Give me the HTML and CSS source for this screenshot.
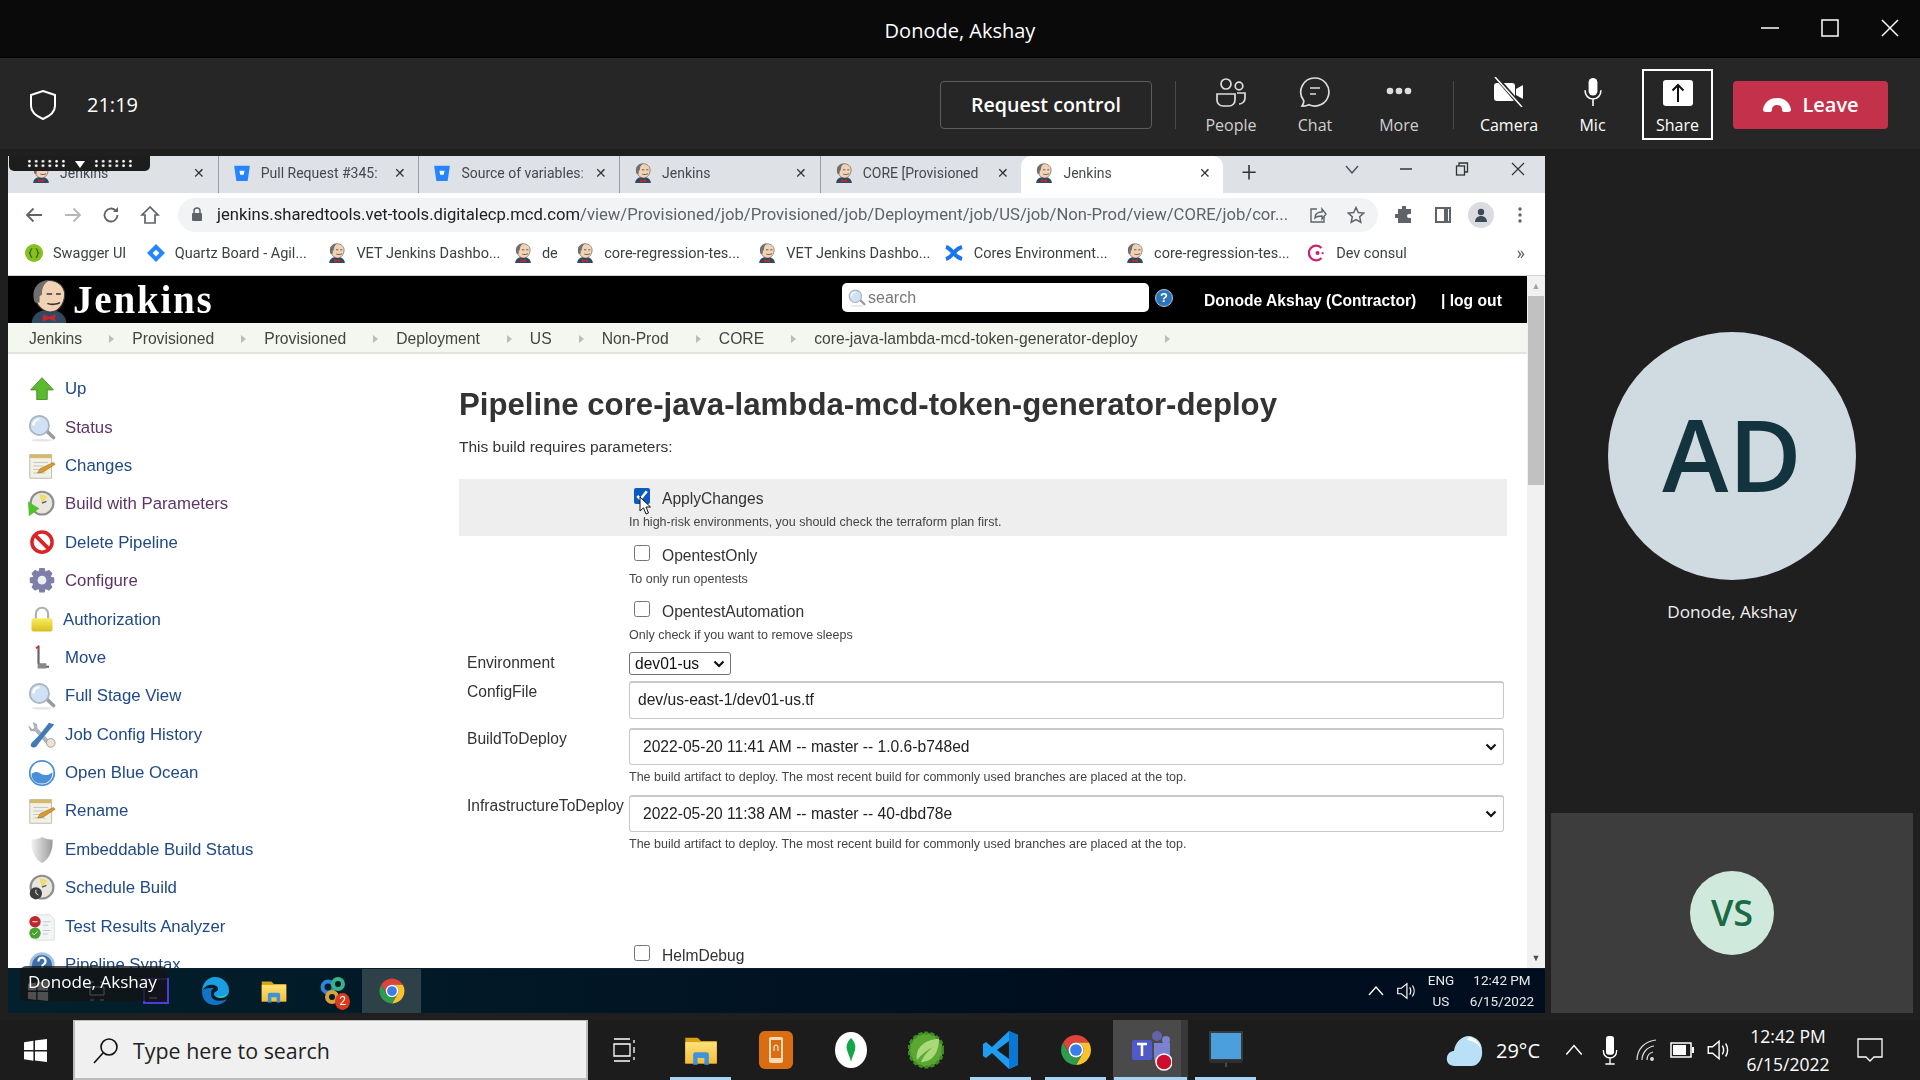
FILE: index.html
```html
<!DOCTYPE html>
<html lang="en">
<head>
    <meta charset="UTF-8">
    <meta name="viewport" content="width=device-width, initial-scale=1.0">
    <title>Meeting - Donode, Akshay</title>
    <link rel="stylesheet" href="styles.css">
</head>
<body>
    <!-- shared icons -->
    <svg class="sprite" xmlns="http://www.w3.org/2000/svg">
        <defs>
            <linearGradient id="lockGold" x1="0" y1="0" x2="0" y2="1"><stop offset="0" stop-color="#f7ee63"/><stop offset="1" stop-color="#d9bf1c"/></linearGradient>
            <linearGradient id="silver" x1="0" y1="0" x2="1" y2="0"><stop offset="0" stop-color="#f2f2f2"/><stop offset="1" stop-color="#9a9a9a"/></linearGradient>
            <linearGradient id="folderFill" x1="0" y1="0" x2="0" y2="1"><stop offset="0" stop-color="#ffe27a"/><stop offset="1" stop-color="#f4bd3c"/></linearGradient>
        </defs>
        <symbol id="butler" viewBox="0 0 24 28">
            <path d="M1 28c0-4 3-7 7-8h8c4 1 7 4 7 8z" fill="#2f4a60"/>
            <path d="M8 22.5l4 1.5 4-1.5v4.5l-4-1.5-4 1.5z" fill="#c7262c"/>
            <path d="M3 11C2 5 6 1 12 1s10 4 10 9c-.3 6-4 11-9 11-5 0-9-4-10-10z" fill="#f2d2b4" stroke="#3a3a3a" stroke-width=".7"/>
            <path d="M3 15C0 7 5 1 12 1 8.500 3 7.500 6 7.500 10l-1.500 1v4z" fill="#6f6f6f"/>
            <path d="M10.500 9.500h3.500M16.500 9.500h3M11 15.500c2 1 6 .8 8-.5" stroke="#333" stroke-width="1" fill="none"/>
        </symbol>
        <symbol id="bitbucket" viewBox="0 0 16 16">
            <path d="M1 1.500h14L13 15H3z" fill="#2684ff"/>
            <path d="M5.800 6h4.400l-.6 3.500H6.400z" fill="#fff"/>
        </symbol>
        <symbol id="chrome" viewBox="0 0 24 24">
            <path d="M3.340 7A10 10 0 0 1 20.660 7H12A5 5 0 0 0 7.670 14.500z" fill="#e0433a"/>
            <path d="M20.660 7A10 10 0 0 1 12 22L16.330 14.500A5 5 0 0 0 12 7z" fill="#fbc02d"/>
            <path d="M12 22A10 10 0 0 1 3.340 7L7.670 14.500A5 5 0 0 0 16.330 14.500z" fill="#2e9c4c"/>
            <circle cx="12" cy="12" r="5" fill="#fff"/>
            <circle cx="12" cy="12" r="3.900" fill="#3b7de8"/>
        </symbol>
        <symbol id="folder" viewBox="0 0 32 32">
            <path d="M2 5h11l3 3h14v20H2z" fill="#d9a014"/>
            <path d="M2 9h28v19H2z" fill="url(#folderFill)"/>
            <path d="M9 29v-9c0-1 1-2 2-2h10c1 0 2 1 2 2v9h-4v-6h-6v6z" fill="#3f93d8"/>
        </symbol>
        <symbol id="magnifier" viewBox="0 0 32 32">
            <path d="M19 20l3-3 9 9c1 1 0 2-.500 2.500s-1.500 1-2.500 0z" fill="#9a9a9a"/>
            <circle cx="13" cy="13" r="11" fill="#cfe2f5" stroke="#a8b4bf" stroke-width="2"/>
            <path d="M6 13a7 7 0 0 1 7-7" stroke="#fff" stroke-width="2.500" fill="none"/>
            <ellipse cx="16" cy="30" rx="12" ry="1.500" fill="#e6e6e6"/>
        </symbol>
        <symbol id="notepad" viewBox="0 0 32 32">
            <path d="M2 3h25v27H2z" fill="#f3f0e4" stroke="#b5b5a8"/>
            <path d="M2 3h25v4H2z" fill="#d4b96a"/>
            <path d="M6 12h17M6 16h12M6 20h9M6 24h14" stroke="#b9c3cc"/>
            <path d="M11 24l3-5 15-7 2 2-14 9z" fill="#e09a2b" stroke="#8a5d14" stroke-width=".6"/>
        </symbol>
        <symbol id="clock" viewBox="0 0 32 32">
            <circle cx="16" cy="15" r="13" fill="#e8e6df" stroke="#8e8e8e" stroke-width="2.500"/>
            <path d="M16 15L13 5a10 10 0 0 1 9 3z" fill="#f1dc6a"/>
            <path d="M16 15l5 -2" stroke="#555" stroke-width="1.500"/>
        </symbol>
        <symbol id="teamsMic" viewBox="0 0 24 34">
            <rect x="7" y="1" width="10" height="20" rx="5" fill="#fff"/>
            <path d="M3 15c0 6 4 10 9 10s9-4 9-10M12 25v8" stroke="#fff" stroke-width="1.800" fill="none"/>
        </symbol>
        <symbol id="speaker" viewBox="0 0 24 24">
            <path d="M3 9h4l6-5v16l-6-5H3z" fill="none" stroke="#fff" stroke-width="1.300"/>
            <path d="M16 8c1.500 2.500 1.500 5.500 0 8M19 6c2.500 3.500 2.500 8.500 0 12" stroke="#fff" stroke-width="1.300" fill="none"/>
        </symbol>
        <symbol id="caret" viewBox="0 0 20 20">
            <path d="M3 14l7-8 7 8" stroke="#fff" stroke-width="1.400" fill="none"/>
        </symbol>
        <symbol id="winLogo" viewBox="0 0 24 24">
            <path d="M1 4l9-1.300V11.500H1zM11.500 2.500L23 1v10.500H11.500zM1 13h9v8.800L1 20.500zM11.500 13H23v10l-11.500-1.500z" fill="#fff"/>
        </symbol>
    </svg>

    <header class="title-bar">
        <span class="title-name">Donode, Akshay</span>
        <div class="window-buttons">
            <svg width="18" height="18" viewBox="0 0 18 18"><path d="M0 9h18" stroke="#fff" stroke-width="1.500"/></svg>
            <svg width="18" height="18" viewBox="0 0 18 18"><rect x="1" y="1" width="16" height="16" fill="none" stroke="#fff" stroke-width="1.500"/></svg>
            <svg width="18" height="18" viewBox="0 0 18 18"><path d="M1 1l16 16M17 1L1 17" stroke="#fff" stroke-width="1.500"/></svg>
        </div>
    </header>

    <div class="meeting-bar">
        <svg class="shield" width="28" height="30" viewBox="0 0 28 30"><path d="M14 1l12 4v11c0 6-5 10-12 13C7 26 2 22 2 16V5z" fill="none" stroke="#fff" stroke-width="2"/></svg>
        <span class="timer">21:19</span>
        <button class="request-btn" type="button">Request control</button>
        <span class="bar-divider"></span>
        <div class="bar-item">
            <svg width="32" height="30" viewBox="0 0 32 30" fill="none" stroke="#ddd" stroke-width="1.700"><circle cx="11" cy="7" r="5"/><circle cx="24" cy="9" r="3.800"/><path d="M2 17h18v6a6 6 0 0 1-6 6H8a6 6 0 0 1-6-6z"/><path d="M22 16h8v5a6 6 0 0 1-6 6"/></svg>
            <span>People</span>
        </div>
        <div class="bar-item">
            <svg width="32" height="30" viewBox="0 0 32 30" fill="none" stroke="#ddd" stroke-width="1.700"><path d="M16 1a14 14 0 1 1-6 26.700c-2 1-4 1.500-7 1.300 1.500-2 2-3.500 1.700-5.500A14 14 0 0 1 16 1z"/><path d="M11 11h10M11 17h6"/></svg>
            <span>Chat</span>
        </div>
        <div class="bar-item">
            <svg width="32" height="30" viewBox="0 0 32 30" fill="#ddd"><circle cx="7" cy="14" r="3.300"/><circle cx="16" cy="14" r="3.300"/><circle cx="25" cy="14" r="3.300"/></svg>
            <span>More</span>
        </div>
        <span class="bar-divider bar-divider-right"></span>
        <div class="bar-item bar-item-on">
            <svg width="32" height="30" viewBox="0 0 32 30"><rect x="1" y="6" width="21" height="18" rx="3" fill="#fff"/><path d="M23 12l7-4v14l-7-4z" fill="#fff"/><path d="M3 0l26 30" stroke="#262626" stroke-width="4"/><path d="M2 0l27 30" stroke="#fff" stroke-width="1.500"/></svg>
            <span>Camera</span>
        </div>
        <div class="bar-item bar-item-on bar-item-mic">
            <svg width="24" height="30" viewBox="0 0 24 34"><use href="#teamsMic"/></svg>
            <span>Mic</span>
        </div>
        <div class="bar-item bar-item-on share-btn">
            <svg width="32" height="30" viewBox="0 0 32 30"><rect x="1" y="1" width="30" height="26" rx="3" fill="#fff"/><path d="M16 23V6M10.500 11.500L16 6l5.500 5.500" stroke="#111" stroke-width="2" fill="none"/></svg>
            <span>Share</span>
        </div>
        <button class="leave-btn" type="button">
            <svg width="30" height="16" viewBox="0 0 30 16"><path d="M1 12C3 4 9 1 15 1s12 3 14 11c.3 2-1 3-2.500 3H22c-1.500 0-2-1-2-2.500 0-3-2-4.500-5-4.500s-5 1.500-5 4.500C10 14 9.500 15 8 15H3.500C2 15 .7 14 1 12z" fill="#fff"/></svg>
            Leave
        </button>
    </div>

    <main class="stage">
        <section class="shared-window">
            <div class="grip">
                <span class="grip-dots"></span>
                <svg width="12" height="10" viewBox="0 0 12 10"><path d="M1 2h10L6 9z" fill="#fff"/></svg>
                <span class="grip-dots"></span>
            </div>

            <div class="tab-strip">
                <div class="tab"><svg class="fav"><use href="#butler"/></svg><span class="tab-title">Jenkins</span><span class="tab-close">✕</span></div>
                <div class="tab"><svg class="fav"><use href="#bitbucket"/></svg><span class="tab-title">Pull Request #345:</span><span class="tab-close">✕</span></div>
                <div class="tab"><svg class="fav"><use href="#bitbucket"/></svg><span class="tab-title">Source of variables:</span><span class="tab-close">✕</span></div>
                <div class="tab"><svg class="fav"><use href="#butler"/></svg><span class="tab-title">Jenkins</span><span class="tab-close">✕</span></div>
                <div class="tab"><svg class="fav"><use href="#butler"/></svg><span class="tab-title">CORE [Provisioned</span><span class="tab-close">✕</span></div>
                <div class="tab tab-active"><svg class="fav"><use href="#butler"/></svg><span class="tab-title">Jenkins</span><span class="tab-close">✕</span></div>
                <span class="tab-new">+</span>
                <svg class="strip-chevron" width="14" height="9" viewBox="0 0 14 9"><path d="M1 1l6 7 6-7" stroke="#45494f" stroke-width="1.300" fill="none"/></svg>
                <div class="strip-controls">
                    <svg width="14" height="14" viewBox="0 0 14 14"><path d="M1 7h12" stroke="#333" stroke-width="1.500"/></svg>
                    <svg width="14" height="14" viewBox="0 0 14 14" fill="none" stroke="#333" stroke-width="1.300"><rect x="1.500" y="4" width="8" height="9"/><path d="M4 4V1h8.500v9H9.500"/></svg>
                    <svg width="14" height="14" viewBox="0 0 14 14"><path d="M1 1l12 12M13 1L1 13" stroke="#333" stroke-width="1.200"/></svg>
                </div>
            </div>

            <div class="address-row">
                <span class="nav-btn"><svg width="18" height="18" viewBox="0 0 18 18" fill="none" stroke="#5f6368" stroke-width="1.800"><path d="M17 9H2M8.500 2.500L2 9l6.500 6.500"/></svg></span>
                <span class="nav-btn"><svg width="18" height="18" viewBox="0 0 18 18" fill="none" stroke="#b5b8bc" stroke-width="1.800"><path d="M1 9h15M9.500 2.500L16 9l-6.500 6.500"/></svg></span>
                <span class="nav-btn"><svg width="18" height="18" viewBox="0 0 18 18" fill="none" stroke="#5f6368" stroke-width="1.800"><path d="M15.500 9a6.500 6.500 0 1 1-2-4.700"/><path d="M16 1v5h-5" fill="#5f6368" stroke="none"/></svg></span>
                <span class="nav-btn"><svg width="20" height="20" viewBox="0 0 20 20" fill="none" stroke="#5f6368" stroke-width="1.700"><path d="M10 2L2 10h3v8h10v-8h3z"/></svg></span>
                <div class="omnibox">
                    <svg width="12" height="15" viewBox="0 0 12 15"><rect x="1" y="6" width="10" height="8" rx="1" fill="#5f6368"/><path d="M3 6V4a3 3 0 0 1 6 0v2" stroke="#5f6368" stroke-width="1.500" fill="none"/></svg>
                    <span class="url"><b>jenkins.sharedtools.vet-tools.digitalecp.mcd.com</b>/view/Provisioned/job/Provisioned/job/Deployment/job/US/job/Non-Prod/view/CORE/job/cor...</span>
                    <svg class="omni-share" width="18" height="18" viewBox="0 0 18 18" fill="none" stroke="#5f6368" stroke-width="1.400"><path d="M8 3H2v13h13v-5"/><path d="M6 12c0-4 3-6 7-6V3l4 5-4 5v-3c-3 0-5 0-7 2z"/></svg>
                    <svg class="omni-star" width="18" height="18" viewBox="0 0 18 18" fill="none" stroke="#5f6368" stroke-width="1.500"><path d="M9 1.500l2.300 5 5.400.6-4 3.700 1.100 5.400L9 13.500l-4.800 2.700 1.100-5.400-4-3.700 5.400-.6z"/></svg>
                </div>
                <div class="browser-tools">
                    <span class="nav-btn"><svg width="18" height="18" viewBox="0 0 18 18" fill="#5f6368"><path d="M7 1a2 2 0 0 1 4 0v2h5v5h-2a2 2 0 0 0 0 4h2v5H3v-5H1a2 2 0 0 1 0-4h2V3h4z"/></svg></span>
                    <span class="nav-btn"><svg width="16" height="16" viewBox="0 0 16 16" fill="none" stroke="#5f6368" stroke-width="2"><rect x="1" y="1" width="14" height="14"/><path d="M11 1v14" stroke-width="4"/></svg></span>
                    <span class="nav-btn"><span class="profile"><svg width="14" height="14" viewBox="0 0 14 14" fill="#3c4a5a"><circle cx="7" cy="4" r="3.200"/><path d="M1 14c0-4 3-6 6-6s6 2 6 6z"/></svg></span></span>
                    <span class="nav-btn"><svg width="4" height="16" viewBox="0 0 4 16" fill="#5f6368"><circle cx="2" cy="2" r="1.700"/><circle cx="2" cy="8" r="1.700"/><circle cx="2" cy="14" r="1.700"/></svg></span>
                </div>
            </div>

            <div class="bookmarks">
                <span class="bm"><svg class="fav" viewBox="0 0 16 16"><circle cx="8" cy="8" r="8" fill="#85c01f"/><path d="M6.500 4c-2 0-1 3-2.500 4 1.500 1 .5 4 2.500 4M9.500 4c2 0 1 3 2.500 4-1.500 1-.5 4-2.500 4" stroke="#2d5c0c" fill="none"/></svg>Swagger UI</span>
                <span class="bm"><svg class="fav" viewBox="0 0 16 16"><path d="M8 0l8 8-8 8-8-8z" fill="#2684ff"/><path d="M8 5l3 3-3 3-3-3z" fill="#fff"/></svg>Quartz Board - Agil...</span>
                <span class="bm"><svg class="fav"><use href="#butler"/></svg>VET Jenkins Dashbo...</span>
                <span class="bm"><svg class="fav"><use href="#butler"/></svg>de</span>
                <span class="bm"><svg class="fav"><use href="#butler"/></svg>core-regression-tes...</span>
                <span class="bm"><svg class="fav"><use href="#butler"/></svg>VET Jenkins Dashbo...</span>
                <span class="bm"><svg class="fav bm-wide" viewBox="0 0 20 18" fill="none" stroke="#1976ee" stroke-width="4"><path d="M2 15C9 13 10 5 18 3"/><path d="M2 3c7 2 8 10 16 12"/></svg>Cores Environment...</span>
                <span class="bm"><svg class="fav"><use href="#butler"/></svg>core-regression-tes...</span>
                <span class="bm"><svg class="fav" viewBox="0 0 16 16"><path d="M12 3.500A6.500 6.500 0 1 0 12 12.500" fill="none" stroke="#ca2171" stroke-width="2"/><circle cx="8.500" cy="8" r="1.800" fill="#ca2171"/><circle cx="13" cy="8" r="1" fill="#ca2171"/></svg>Dev consul</span>
                <span class="bm-more">»</span>
            </div>

            <div class="jenkins-page">
                <div class="jenkins-view">
                    <div class="jenkins-header">
                        <svg class="jenkins-butler"><use href="#butler"/></svg>
                        <span class="jenkins-word">Jenkins</span>
                        <div class="search-box">
                            <svg width="18" height="18"><use href="#magnifier"/></svg>
                            <span>search</span>
                        </div>
                        <span class="help-dot">?</span>
                        <a class="user-name">Donode Akshay (Contractor)</a>
                        <a class="logout">| log out</a>
                    </div>

                    <ul class="crumbs">
                        <li>Jenkins</li>
                        <li>Provisioned</li>
                        <li>Provisioned</li>
                        <li>Deployment</li>
                        <li>US</li>
                        <li>Non-Prod</li>
                        <li>CORE</li>
                        <li>core-java-lambda-mcd-token-generator-deploy</li>
                    </ul>

                    <div class="jenkins-body">
                        <nav class="side-nav">
                            <a class="task"><svg viewBox="0 0 32 32"><path d="M16 3l13 14h-7v11H10V17H3z" fill="#5cb82e" stroke="#3f8f1c"/></svg>Up</a>
                            <a class="task task-visited"><svg><use href="#magnifier"/></svg>Status</a>
                            <a class="task"><svg><use href="#notepad"/></svg>Changes</a>
                            <a class="task task-visited"><svg viewBox="0 0 32 32"><use href="#clock" width="32" height="32"/><path d="M0 13l13 8-12 9z" fill="#4fc22c"/></svg>Build with Parameters</a>
                            <a class="task"><svg viewBox="0 0 32 32"><circle cx="16" cy="15" r="11.500" fill="#fff" stroke="#d9252a" stroke-width="4"/><path d="M8 7l16 16" stroke="#d9252a" stroke-width="4.500"/></svg>Delete Pipeline</a>
                            <a class="task task-visited"><svg viewBox="0 0 32 32"><path d="M13 1h6l1 4 4-2 4 4-2 4 4 1v6l-4 1 2 4-4 4-4-2-1 4h-6l-1-4-4 2-4-4 2-4-4-1v-6l4-1-2-4 4-4 4 2z" fill="#7e7fa8"/><circle cx="16" cy="15" r="5" fill="#eeeef5"/></svg>Configure</a>
                            <a class="task task-auth"><svg viewBox="0 0 32 32"><path d="M9 15V9a7 7 0 0 1 14 0v6" stroke="#b0b0b0" stroke-width="2.500" fill="none"/><rect x="4" y="14" width="24" height="15" rx="2" fill="url(#lockGold)"/></svg>Authorization</a>
                            <a class="task"><svg viewBox="0 0 32 32"><path d="M12 3v19l3 4h9" stroke="#666" stroke-width="2.500" fill="none"/><path d="M9 5l4-3" stroke="#c33" stroke-width="2"/><rect x="11" y="22" width="10" height="6" fill="#888"/></svg>Move</a>
                            <a class="task"><svg><use href="#magnifier"/></svg>Full Stage View</a>
                            <a class="task"><svg viewBox="0 0 32 32"><path d="M6 2l4 2v4l18 19-3 3L8 11H3L1 6l4 4 3-2z" fill="#b2b6bd" stroke="#83878d" stroke-width=".6"/><path d="M30 4l-6-2-11 14-8 8c-2 2-3 5 0 6s5-1 6-3l7-9z" fill="#4379b4"/><circle cx="26" cy="25" r="5" fill="#eee3d3" stroke="#999"/></svg>Job Config History</a>
                            <a class="task"><svg viewBox="0 0 32 32"><circle cx="16" cy="16" r="14" fill="#fff" stroke="#4a90d9" stroke-width="2"/><path d="M4 17c4-3 7-3 11 0 4 2 8 2 13-2 0 8-5 13-12 13S4 24 4 17z" fill="#4a90d9"/></svg>Open Blue Ocean</a>
                            <a class="task"><svg><use href="#notepad"/></svg>Rename</a>
                            <a class="task"><svg viewBox="0 0 32 32"><path d="M16 1c4 2 8 3 12 3 1 11-3 22-12 27C7 26 3 15 4 4c4 0 8-1 12-3z" fill="url(#silver)"/><path d="M16 5v20" stroke="#bbb" stroke-dasharray="2 3"/></svg>Embeddable Build Status</a>
                            <a class="task"><svg viewBox="0 0 32 32"><use href="#clock" width="32" height="32"/><circle cx="9" cy="22" r="7" fill="#3d3d3d"/><path d="M9 18v4l3 2" stroke="#fff" fill="none"/></svg>Schedule Build</a>
                            <a class="task"><svg viewBox="0 0 32 32"><path d="M9 2h16l5 5v24H9z" fill="#f2f4f6" stroke="#dcdcdc"/><path d="M17 10h9M17 14h6M17 20h9M17 24h6" stroke="#b6c6d6"/><circle cx="8" cy="10" r="6.500" fill="#c0262b"/><circle cx="8" cy="23" r="6.500" fill="#46a52c"/><path d="M5 10h6M5 23l2 2 4-4" stroke="#fff" fill="none"/></svg>Test Results Analyzer</a>
                            <a class="task"><svg viewBox="0 0 32 32"><circle cx="16" cy="16" r="13" fill="#3c6fa8" stroke="#a9c3de" stroke-width="3"/><path d="M12 12a4 4 0 1 1 6 3c-2 1-2 2-2 4M16 22v3" stroke="#fff" stroke-width="2.500" fill="none"/></svg>Pipeline Syntax</a>
                        </nav>

                        <form class="build-form">
                            <h1>Pipeline core-java-lambda-mcd-token-generator-deploy</h1>
                            <p class="intro">This build requires parameters:</p>

                            <div class="param param-bool param-hover">
                                <label class="check"><input type="checkbox" checked>ApplyChanges
                                    <svg class="mouse" width="12" height="19" viewBox="0 0 12 19"><path d="M1 1v14l3.500-3.200L7 18l2.500-1-2.500-6h4.500z" fill="#fff" stroke="#111"/></svg>
                                </label>
                                <p class="param-desc">In high-risk environments, you should check the terraform plan first.</p>
                            </div>
                            <div class="param param-bool">
                                <label class="check"><input type="checkbox">OpentestOnly</label>
                                <p class="param-desc">To only run opentests</p>
                            </div>
                            <div class="param param-bool">
                                <label class="check"><input type="checkbox">OpentestAutomation</label>
                                <p class="param-desc">Only check if you want to remove sleeps</p>
                            </div>

                            <div class="param param-env">
                                <span class="param-name">Environment</span>
                                <select class="env-select"><option>dev01-us</option></select>
                            </div>
                            <div class="param param-config">
                                <span class="param-name">ConfigFile</span>
                                <input class="text-field" type="text" value="dev/us-east-1/dev01-us.tf">
                            </div>
                            <div class="param param-build">
                                <span class="param-name">BuildToDeploy</span>
                                <select class="wide-select"><option>2022-05-20 11:41 AM -- master -- 1.0.6-b748ed</option></select>
                                <p class="param-desc">The build artifact to deploy. The most recent build for commonly used branches are placed at the top.</p>
                            </div>
                            <div class="param param-build">
                                <span class="param-name">InfrastructureToDeploy</span>
                                <select class="wide-select"><option>2022-05-20 11:38 AM -- master -- 40-dbd78e</option></select>
                                <p class="param-desc">The build artifact to deploy. The most recent build for commonly used branches are placed at the top.</p>
                            </div>

                            <div class="param param-bool param-helm">
                                <label class="check"><input type="checkbox">HelmDebug</label>
                            </div>
                        </form>
                    </div>
                </div>

                <div class="scrollbar">
                    <span class="scroll-arrow">▲</span>
                    <span class="scroll-thumb"></span>
                    <span class="scroll-arrow scroll-arrow-down">▼</span>
                </div>
            </div>

            <div class="inner-taskbar">
                <div class="inner-tip">Donode, Akshay</div>
                <span class="inner-app"><svg width="22" height="22"><use href="#winLogo"/></svg></span>
                <span class="inner-app"><svg width="18" height="22" viewBox="0 0 18 22" fill="none" stroke="#fff"><path d="M2 2h4M12 2h4M2 7h14v8H2zM2 20h4M12 20h4"/></svg></span>
                <span class="inner-app"><svg width="26" height="26" viewBox="0 0 26 26"><rect x="1" y="1" width="24" height="24" fill="#13123a" stroke="#4a3fd0" stroke-width="2"/><path d="M6 20h8" stroke="#fff"/></svg></span>
                <span class="inner-app"><svg width="30" height="30" viewBox="0 0 30 30"><path d="M15 1a14 14 0 0 1 14 14c0 4-3 7-8 7-3 0-7-1-7-4s4-2 4-5S14 8 9 9c-4 1-7 5-7 7C2 8 7 1 15 1z" fill="#1b9de2"/><path d="M2 16c0 7 5 13 13 13 5 0 9-2 12-6-5 3-16 3-16-5 0-5 3-6 3-6-6 0-12 0-12 4z" fill="#1274c4"/><path d="M27 18c-2 4-8 5-11 2 4 1 8 0 11-2z" fill="#42d392"/></svg></span>
                <span class="inner-app"><svg width="28" height="28"><use href="#folder"/></svg></span>
                <span class="inner-app app-badged"><svg width="28" height="30" viewBox="0 0 28 30"><circle cx="9" cy="11" r="5.500" fill="none" stroke="#2e87d6" stroke-width="4"/><circle cx="19" cy="8" r="5" fill="none" stroke="#37b38a" stroke-width="4"/><circle cx="13" cy="21" r="5" fill="none" stroke="#d8a23a" stroke-width="4"/></svg><span class="app-badge">2</span></span>
                <span class="inner-app inner-app-active"><svg width="30" height="30"><use href="#chrome"/></svg></span>
                <div class="inner-tray">
                    <svg class="tray-ico" width="20" height="20"><use href="#caret"/></svg>
                    <svg class="tray-ico" width="22" height="22"><use href="#speaker"/></svg>
                    <div class="tray-text tray-lang"><span>ENG</span><span>US</span></div>
                    <div class="tray-text tray-clock"><span>12:42 PM</span><span>6/15/2022</span></div>
                </div>
            </div>
        </section>

        <aside class="people-side">
            <div class="speaker-tile">
                <div class="avatar">AD</div>
                <div class="speaker-name">Donode, Akshay</div>
            </div>
            <div class="small-tile">
                <div class="avatar-small">VS</div>
            </div>
        </aside>
    </main>

    <footer class="win-taskbar">
        <span class="win-start"><svg width="25" height="25"><use href="#winLogo"/></svg></span>
        <div class="win-search">
            <svg width="28" height="28" viewBox="0 0 28 28" fill="none" stroke="#111" stroke-width="1.600"><circle cx="17" cy="10" r="8"/><path d="M11 16L2 26"/></svg>
            <span>Type here to search</span>
        </div>
        <span class="win-app win-taskview"><svg width="26" height="26" viewBox="0 0 26 26" fill="none" stroke="#fff" stroke-width="1.300"><path d="M3 2h16M3 24h16M3 7h16v12H3zM23 3v3M23 10v6M23 20v3"/></svg></span>
        <span class="win-app win-running"><svg width="36" height="36"><use href="#folder"/></svg></span>
        <span class="win-app"><svg width="34" height="38" viewBox="0 0 34 38"><rect width="34" height="38" rx="6" fill="#d96d12"/><rect x="10" y="6" width="14" height="26" rx="2" fill="#f7d9b4"/><rect x="12" y="9" width="10" height="18" fill="#d96d12"/><path d="M15 20v-4a2 2 0 0 1 4 0v4" stroke="#fff" fill="none"/></svg></span>
        <span class="win-app"><svg width="32" height="36" viewBox="0 0 32 36"><ellipse cx="16" cy="18" rx="16" ry="18" fill="#fff"/><path d="M16 6c4 4 5 8 4 12s-3 7-4 12c-1-5-3-8-4-12s0-8 4-12z" fill="#14a54a"/></svg></span>
        <span class="win-app"><svg width="36" height="40" viewBox="0 0 36 40"><circle cx="18" cy="20" r="17" fill="#5aa832" stroke="#3f8c24" stroke-width="3" stroke-dasharray="4 2"/><path d="M9 30C7 17 18 9 31 9c0 14-7 23-18 23 3-7 7-11 12-15-6 3-11 7-16 13z" fill="#a9d97a"/></svg></span>
        <span class="win-app win-running"><svg width="36" height="40" viewBox="0 0 36 40"><path d="M26 1l9 4v30l-9 4L9 23 3 28 0 26v-12l3-2 6 5z" fill="#1f9cf0"/><path d="M26 11L14 20l12 9z" fill="#1a1a1a"/><path d="M26 1l9 4v30l-9 4z" fill="#0a78d2"/></svg></span>
        <span class="win-app win-running"><svg width="36" height="36"><use href="#chrome"/></svg></span>
        <span class="win-app win-teams"><svg width="42" height="42" viewBox="0 0 42 42"><circle cx="27" cy="7" r="5" fill="#6264a7"/><circle cx="36" cy="11" r="4" fill="#7b83d0"/><path d="M24 14h16v14c0 5-4 9-8 9s-8-4-8-9z" fill="#7b83d0"/><rect x="2" y="11" width="20" height="20" rx="2" fill="#5059c9"/><path d="M7 15h10M12 15v12" stroke="#fff" stroke-width="2.500"/><circle cx="34" cy="33" r="8" fill="#cf0e2f" stroke="#fff" stroke-width="1.500"/></svg></span>
        <span class="win-app win-running"><svg width="34" height="40" viewBox="0 0 34 40"><rect x="1" y="2" width="32" height="28" fill="#4b9fdc" stroke="#36393d" stroke-width="2"/><rect x="1" y="30" width="32" height="3" fill="#2e2e2e"/><path d="M17 33v4" stroke="#777"/></svg></span>
        <div class="win-tray">
            <svg class="cloud" width="38" height="34" viewBox="0 0 38 34"><path d="M9 33C3 33 0 29 1 24c1-4 4-6 7-6 1-8 7-15 15-15 8 1 13 7 13 14 1 8-3 16-11 16z" fill="#b9e0f7"/><path d="M23 4c6 1 11 6 12 12-3-6-8-8-14-9z" fill="#fff"/></svg>
            <span class="win-temp">29°C</span>
            <span class="win-tray-ico"><svg width="22" height="22"><use href="#caret"/></svg></span>
            <span class="win-tray-ico"><svg width="16" height="32" viewBox="0 0 24 44"><rect x="6" y="1" width="12" height="28" rx="4" fill="#fff"/><path d="M2 22c0 8 4 12 10 12s10-4 10-12M12 34v8M5 43h14" stroke="#fff" stroke-width="2" fill="none"/></svg></span>
            <span class="win-tray-ico"><svg width="22" height="22" viewBox="0 0 22 22" fill="none" stroke="#ddd" stroke-width="1.200"><path d="M2 21C2 10 10 2 21 1M7 21c0-7 5-13 12-14M12 21c0-4 2-7 6-8"/><circle cx="17" cy="20" r="1.300" fill="#ddd"/></svg></span>
            <span class="win-tray-ico"><svg width="24" height="16" viewBox="0 0 24 16"><rect x="1" y="1" width="20" height="14" fill="none" stroke="#fff" stroke-width="1.500"/><rect x="3" y="3" width="13" height="10" fill="#fff"/><path d="M22 5h2v6h-2z" fill="#fff"/></svg></span>
            <span class="win-tray-ico"><svg width="26" height="26"><use href="#speaker"/></svg></span>
            <div class="win-clock"><span>12:42 PM</span><span>6/15/2022</span></div>
            <span class="win-notify"><svg width="26" height="26" viewBox="0 0 26 26" fill="none" stroke="#fff" stroke-width="1.300"><path d="M1 2h24v18h-8l-4 4-4-4H1z"/></svg></span>
        </div>
    </footer>
</body>
</html>
```

FILE: styles.css
```css
* {
    box-sizing: border-box;
}

html, body {
    margin: 0;
    height: 100%;
}

body {
    width: 1920px;
    height: 1080px;
    display: flex;
    flex-direction: column;
    overflow: hidden;
    background-color: #1f1f1f;
    color: #fff;
    font-family: "Open Sans", sans-serif;
}

.sprite {
    position: absolute;
    width: 0;
    height: 0;
}

/* teams title + meeting bar */
.title-bar {
    height: 58px;
    flex: none;
    display: flex;
    align-items: center;
    justify-content: center;
    position: relative;
    background-color: #0a0a0a;
    border-bottom: 1px solid #000;
    font-size: 20px;
}

.title-name {
    margin-top: 3px;
}

.window-buttons {
    position: absolute;
    right: 21px;
    top: 19px;
    display: flex;
    gap: 42px;
}

.meeting-bar {
    height: 91px;
    flex: none;
    display: flex;
    align-items: center;
    padding: 2px 0 0 29px;
    background-color: #262626;
}

.timer {
    margin-left: 30px;
    font-size: 20px;
}

.request-btn {
    width: 212px;
    height: 48px;
    margin-left: auto;
    background-color: #262626;
    color: #fff;
    border: 1px solid #5c5c5c;
    border-radius: 4px;
    font-family: "Open Sans", sans-serif;
    font-weight: 600;
    font-size: 19.600px;
}

.bar-divider {
    width: 1px;
    height: 48px;
    margin: 0 13px 0 23px;
    background-color: #4a4a4a;
}

.bar-divider-right {
    margin: 0 13px 0 12px;
}

.bar-item {
    width: 84px;
    height: 71px;
    padding-top: 8px;
    display: flex;
    flex-direction: column;
    align-items: center;
    color: #d0d0d0;
    font-size: 16px;
}

.bar-item span {
    margin-top: 7px;
}

.bar-item-on {
    color: #fff;
}

.bar-item-mic {
    width: 83px;
}

.share-btn {
    width: 71px;
    margin-left: 8px;
    border: 2px solid #fff;
}

.share-btn span {
    margin-top: 5px;
}

.leave-btn {
    width: 155px;
    height: 48px;
    margin: 0 32px 0 20px;
    display: flex;
    align-items: center;
    justify-content: center;
    gap: 10px;
    background-color: #c4314b;
    color: #fff;
    border: none;
    border-radius: 4px;
    font-family: "Open Sans", sans-serif;
    font-weight: 600;
    font-size: 20px;
}

/* main area */
.stage {
    flex: 1;
    min-height: 0;
    display: flex;
    padding: 7px 7px 7px 8px;
}

.shared-window {
    width: 1537px;
    display: flex;
    flex-direction: column;
    position: relative;
    background-color: #fff;
    color: #333;
    font-family: Roboto, sans-serif;
    filter: blur(0.35px);
}

.grip {
    position: absolute;
    left: 1px;
    top: 0;
    z-index: 3;
    width: 141px;
    height: 15px;
    display: flex;
    align-items: center;
    justify-content: center;
    gap: 7px;
    background-color: #1d1d1d;
    border-radius: 0 0 5px 5px;
}

.grip-dots {
    width: 41px;
    height: 9px;
    background-image: radial-gradient(#fff 1.5px, transparent 1.8px);
    background-size: 6.800px 4.500px;
}

.tab-strip {
    height: 37px;
    flex: none;
    display: flex;
    align-items: center;
    padding-left: 10px;
    position: relative;
    background-color: #dee1e6;
    font-size: 14px;
}

.tab {
    width: 200.700px;
    height: 37px;
    display: flex;
    align-items: center;
    padding: 0 12px 4px 14px;
    position: relative;
    color: #45494f;
    border-right: 1px solid #9b9fa5;
}

.tab:nth-child(5) {
    border-right: none;
}

.tab-active {
    width: 202px;
    background-color: #fff;
    border-right: none;
    border-radius: 10px 10px 0 0;
}

.fav {
    width: 18px;
    height: 20px;
    flex: none;
}

.tab-title {
    flex: 1;
    min-width: 0;
    margin-left: 10px;
    overflow: hidden;
    white-space: nowrap;
    -webkit-mask-image: linear-gradient(90deg, #000 88%, transparent);
    mask-image: linear-gradient(90deg, #000 88%, transparent);
}

.tab-close {
    width: 13px;
    text-align: center;
    font-size: 14px;
    color: #333;
}

.tab-new {
    margin: 0 0 4px 18px;
    font-size: 27px;
    font-weight: 300;
    color: #333;
}

.strip-chevron {
    position: absolute;
    left: 1337px;
    top: 9px;
}

.strip-controls {
    position: absolute;
    right: 20px;
    top: 6px;
    display: flex;
    gap: 42px;
}

.address-row {
    height: 43px;
    flex: none;
    display: flex;
    align-items: center;
    padding-left: 7px;
    background-color: #fff;
}

.nav-btn {
    width: 38.500px;
    display: flex;
    justify-content: center;
    flex: none;
}

.omnibox {
    width: 1200px;
    height: 34px;
    margin-left: 9px;
    padding-left: 13px;
    display: flex;
    align-items: center;
    background-color: #f1f3f4;
    border-radius: 17px;
    flex: none;
    position: relative;
}

.url {
    margin-left: 14px;
    white-space: nowrap;
    font-size: 16.650px;
    color: #5f6368;
}

.url b {
    font-weight: 400;
    color: #202124;
}

.omni-share {
    position: absolute;
    right: 51px;
}

.omni-star {
    position: absolute;
    right: 13px;
}

.browser-tools {
    margin-left: 7px;
    display: flex;
    align-items: center;
}

.profile {
    width: 26px;
    height: 26px;
    display: flex;
    align-items: center;
    justify-content: center;
    background-color: #dadce0;
    border-radius: 50%;
}

.bookmarks {
    height: 39px;
    flex: none;
    display: flex;
    align-items: center;
    gap: 18.500px;
    padding: 0 0 5px 17px;
    position: relative;
    background-color: #fff;
    font-size: 14.500px;
    color: #3c4043;
}

.bm {
    display: flex;
    align-items: center;
    gap: 10px;
    white-space: nowrap;
}

.bm:nth-child(2) {
    margin-left: 2px;
}

.bm:nth-child(3) {
    margin-left: 3px;
}

.bm:nth-child(4) {
    margin-left: -5px;
}

.bm:nth-child(7) {
    margin-left: -5px;
}

.bm .bm-wide {
    width: 20px;
}

.bm-more {
    position: absolute;
    right: 20px;
    top: 6px;
    font-size: 18px;
    color: #5f6368;
}

/* jenkins page */
.jenkins-page {
    flex: 1;
    min-height: 0;
    display: flex;
    border-top: 1px solid #d5d5d5;
    font-family: "Liberation Sans", Arial, sans-serif;
}

.jenkins-view {
    flex: 1;
    min-width: 0;
    display: flex;
    flex-direction: column;
    overflow: hidden;
}

.jenkins-header {
    height: 47px;
    flex: none;
    display: flex;
    align-items: center;
    position: relative;
    background-color: #000;
    color: #fff;
}

.jenkins-butler {
    width: 38px;
    height: 44px;
    margin: 3px 0 0 22px;
}

.jenkins-word {
    margin-left: 5px;
    font-family: "Liberation Serif", serif;
    font-weight: 700;
    font-size: 39px;
    letter-spacing: 1.800px;
}

.search-box {
    position: absolute;
    left: 834px;
    top: 7px;
    width: 307px;
    height: 29px;
    display: flex;
    align-items: center;
    gap: 2px;
    padding-left: 6px;
    background-color: #fff;
    border-radius: 5px;
    color: #777;
    font-size: 16px;
}

.help-dot {
    position: absolute;
    left: 1147px;
    top: 13px;
    width: 18px;
    height: 18px;
    border-radius: 50%;
    background-color: #2d75bb;
    border: 1px solid #a9c6e0;
    color: #fff;
    font-size: 13px;
    font-weight: 700;
    line-height: 16px;
    text-align: center;
}

.user-name {
    position: absolute;
    left: 1196px;
    top: 16px;
    font-weight: 700;
    font-size: 15.650px;
    white-space: nowrap;
}

.logout {
    position: absolute;
    left: 1433px;
    top: 16px;
    font-weight: 700;
    font-size: 15.650px;
    white-space: nowrap;
}

.crumbs {
    height: 31px;
    flex: none;
    display: flex;
    align-items: center;
    list-style: none;
    margin: 0;
    padding: 2px 0 0 21px;
    background-color: #f4f7f0;
    border-bottom: 2px solid #e2e5df;
    font-size: 15.700px;
    color: #444;
}

.crumbs li {
    display: flex;
    align-items: center;
    white-space: nowrap;
}

.crumbs li::after {
    content: "";
    width: 0;
    height: 0;
    margin: 0 18px 0 27px;
    border-left: 5px solid #bbb;
    border-top: 4.500px solid transparent;
    border-bottom: 4.500px solid transparent;
}

.jenkins-body {
    flex: 1;
    min-height: 0;
    display: flex;
    background-color: #fff;
}

.side-nav {
    width: 451px;
    flex: none;
    padding: 16px 0 0 20px;
}

.task {
    height: 38.400px;
    display: flex;
    align-items: center;
    gap: 9px;
    font-size: 16.800px;
    color: #204a87;
}

.task svg {
    width: 28px;
    height: 28px;
    flex: none;
}

.task-visited {
    color: #5c3566;
}

.task-auth {
    gap: 7px;
}

.build-form {
    width: 1048px;
    flex: none;
}

.build-form h1 {
    margin: 33px 0 0;
    font-size: 31.200px;
    line-height: 36px;
    white-space: nowrap;
    color: #333;
}

.intro {
    margin: 14px 0 22px;
    font-size: 15.500px;
    line-height: 20px;
    color: #333;
}

.param {
    display: grid;
    grid-template-columns: 170px 875px;
    font-size: 15.600px;
    color: #333;
}

.param-bool {
    height: 56.500px;
    padding-top: 9px;
}

.param-hover {
    background-color: #eee;
}

.check {
    grid-column: 2;
    height: 20px;
    padding-top: 2px;
    display: flex;
    align-items: center;
    position: relative;
}

.check input {
    width: 16px;
    height: 16px;
    margin: -6px 12px 0 5px;
    accent-color: #0a5ac2;
}

.mouse {
    position: absolute;
    left: 10px;
    top: 8px;
}

.param-desc {
    grid-column: 2;
    margin: 0.500px 0 0;
    font-size: 12.500px;
    line-height: 18px;
    color: #444;
}

.param-name {
    padding-left: 8px;
    white-space: nowrap;
    line-height: 22px;
}

.param-env {
    margin-top: 3.500px;
}

.env-select,
.wide-select {
    appearance: none;
    font-family: "Liberation Sans", Arial, sans-serif;
    font-size: 15.600px;
    background-color: #fff;
    background-image: url("data:image/svg+xml,%3Csvg xmlns='http://www.w3.org/2000/svg' width='12' height='8'%3E%3Cpath d='M1.500 1.500L6 6l4.500-4.500' fill='none' stroke='%23111' stroke-width='2.200'/%3E%3C/svg%3E");
    background-repeat: no-repeat;
}

.env-select {
    width: 102px;
    height: 23px;
    padding: 0 0 0 5px;
    color: #111;
    border: 1px solid #767676;
    border-radius: 3px;
    background-position: right 5px center;
}

.param-config {
    margin-top: 6px;
}

.text-field {
    width: 875px;
    height: 38px;
    padding: 0 8px 2px;
    font-family: "Liberation Sans", Arial, sans-serif;
    font-size: 15.600px;
    color: #222;
    border: 1px solid #c9c9c9;
    border-top-width: 2px;
    border-radius: 3px;
}

.param-build {
    margin-top: 9px;
}

.param-build .param-desc {
    margin-top: 3px;
}

.wide-select {
    width: 875px;
    height: 37px;
    padding: 0 9px 2px 13px;
    color: #222;
    border: 1px solid #c9c9c9;
    border-top-width: 2px;
    border-radius: 3px;
    background-position: right 6px center;
}

.param-helm {
    margin-top: 92px;
    padding-top: 0;
}

.scrollbar {
    width: 18px;
    flex: none;
    display: flex;
    flex-direction: column;
    align-items: center;
    background-color: #f1f1f1;
    color: #a3a3a3;
    font-size: 9px;
}

.scroll-arrow {
    height: 20px;
    line-height: 20px;
}

.scroll-arrow-down {
    margin-top: auto;
    color: #505050;
}

.scroll-thumb {
    width: 16px;
    height: 189px;
    background-color: #c1c1c1;
}

/* taskbar inside the shared screen */
.inner-taskbar {
    height: 45px;
    flex: none;
    display: flex;
    align-items: center;
    position: relative;
    background: linear-gradient(90deg, #03202c, #000e1f 70%);
    border-top: 1px solid #0c1c28;
    color: #fff;
}

.inner-tip {
    position: absolute;
    left: 12px;
    top: -3px;
    z-index: 2;
    width: 147px;
    height: 35px;
    padding-left: 8px;
    background-color: rgba(20, 20, 20, 0.75);
    border-radius: 6px;
    font-family: "Open Sans", sans-serif;
    font-size: 17.100px;
    line-height: 31px;
}

.inner-app {
    width: 59px;
    height: 100%;
    display: flex;
    align-items: center;
    justify-content: center;
    position: relative;
}

.inner-app-active {
    background-color: #2e4048;
}

.app-badge {
    position: absolute;
    right: 12px;
    bottom: 3px;
    width: 15px;
    height: 17px;
    border-radius: 50%;
    background-color: #d83b1e;
    font-size: 12px;
    line-height: 17px;
    text-align: center;
}

.inner-tray {
    margin-left: auto;
    padding-right: 2px;
    display: flex;
    align-items: center;
    height: 100%;
}

.tray-ico {
    width: 30px;
    flex: none;
}

.tray-text {
    height: 100%;
    display: flex;
    flex-direction: column;
    justify-content: center;
    align-items: center;
    font-size: 13.500px;
    line-height: 21px;
    color: #e8e8e8;
}

.tray-lang {
    width: 40px;
}

.tray-clock {
    width: 82px;
}

/* right column */
.people-side {
    width: 362px;
    margin-left: 6px;
    display: flex;
    flex-direction: column;
}

.speaker-tile {
    height: 657px;
    display: flex;
    flex-direction: column;
    align-items: center;
    padding-top: 176px;
}

.avatar {
    width: 248px;
    height: 248px;
    padding-bottom: 7px;
    display: flex;
    align-items: center;
    justify-content: center;
    border-radius: 50%;
    background-color: #cfdae1;
    color: #13333f;
    font-weight: 600;
    font-size: 100px;
}

.speaker-name {
    margin-top: 20px;
    font-size: 17.200px;
    color: #f0f0f0;
}

.small-tile {
    flex: 1;
    display: flex;
    align-items: center;
    justify-content: center;
    background-color: #3d3d3d;
}

.avatar-small {
    width: 84px;
    height: 84px;
    padding-bottom: 2px;
    display: flex;
    align-items: center;
    justify-content: center;
    border-radius: 50%;
    background-color: #d0e9dd;
    color: #1a6a45;
    font-weight: 600;
    font-size: 36px;
}

/* windows taskbar */
.win-taskbar {
    height: 60px;
    flex: none;
    display: flex;
    align-items: center;
    background-color: #1c1c1c;
    color: #fff;
}

.win-start {
    width: 73px;
    display: flex;
    justify-content: center;
    padding-right: 2px;
}

.win-search {
    width: 515px;
    height: 60px;
    display: flex;
    align-items: center;
    gap: 13px;
    padding: 2px 0 0 17px;
    background-color: #f0f0f0;
    border: 2px solid #bdbdbd;
    border-top-width: 1px;
    color: #222;
    font-size: 21.400px;
}

.win-app {
    width: 75px;
    height: 60px;
    display: flex;
    align-items: center;
    justify-content: center;
    position: relative;
}

.win-taskview svg {
    margin-right: 4px;
}

.win-running::after {
    content: "";
    position: absolute;
    left: 7px;
    right: 7px;
    bottom: 0;
    height: 3px;
    background-color: #a5d4f7;
}

.win-teams {
    background: linear-gradient(90deg, #4a4a4a 91%, #383838 91%);
}

.win-teams::after {
    content: "";
    position: absolute;
    left: 1px;
    right: 1px;
    bottom: 0;
    height: 3px;
    background-color: #a5d4f7;
}

.win-tray {
    margin-left: auto;
    padding-right: 20px;
    display: flex;
    align-items: center;
    height: 100%;
}

.cloud {
    width: 40px;
}

.win-temp {
    width: 43px;
    margin: 0 17px 0 11px;
    font-size: 20px;
    white-space: nowrap;
}

.win-tray-ico {
    width: 36px;
    display: flex;
    justify-content: center;
}

.win-clock {
    width: 104px;
    display: flex;
    flex-direction: column;
    align-items: center;
    font-size: 17.500px;
    line-height: 28px;
}

.win-notify {
    width: 60px;
    display: flex;
    justify-content: center;
}
```
